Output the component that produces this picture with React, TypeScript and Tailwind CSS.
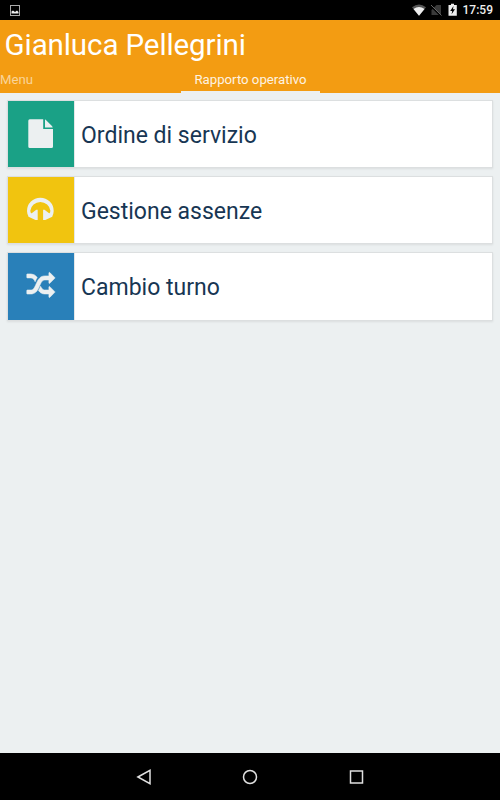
import type { ReactNode } from "react";

type Item = { label: string; color: string; icon: ReactNode };

const items: Item[] = [
  {
    label: "Ordine di servizio",
    color: "bg-[#1aa186]",
    icon: (
      <>
        <path d="M21.8 18.2H35.2V28.1H45V45.4Q45 46.9 43.5 46.9H21.8Q20.3 46.9 20.3 45.4V19.7Q20.3 18.2 21.8 18.2Z" />
        <path d="M37 18.5Q37.8 18.8 38.4 19.4L43.7 24.7Q44.4 25.4 44.7 26.4H37Z" />
      </>
    ),
  },
  {
    label: "Gestione assenze",
    color: "bg-[#f1c40f]",
    icon: (
      <>
        <path d="M20.7 39.5Q19 37 19 34A13.3 13.3 0 0 1 45.7 34Q45.7 37 44 39.5L41 37Q42.4 35.8 42.4 33.8A10.1 9.8 0 0 0 22.3 33.8Q22.3 35.8 23.7 37Z" />
        <path d="M29.7 32.7V43H27.5L20.5 39.8V37.3L23.7 36.3L28.3 32.7Z M35.1 32.7V43H37.3L44.3 39.8V37.3L41.1 36.3L36.5 32.7Z" />
      </>
    ),
  },
  {
    label: "Cambio turno",
    color: "bg-[#2980b9]",
    icon: (
      <g transform="translate(18.8 18.9) scale(.0157)" stroke="#ecf0f1" strokeWidth="35">
        <path d="M666 353q-60 92-137 273-22-45-37-72.5t-40.5-63.5-51-56.5-63-35-81.5-14.5H32q-14 0-23-9t-9-23V160q0-14 9-23t23-9h224q250 0 410 225zM1792 1280q0 14-9 23l-320 320q-9 9-23 9-13 0-22.5-9.5t-9.5-22.5v-192q-32 0-85 .5t-81 1-73-1-71-5-64-10.5-63-18.5-58-28.5-59-40-55-53.5-56-69.5q59-93 136-273 22 45 37 72.5t40.5 63.5 51 56.5 63 35 81.5 14.5h256V960q0-14 9-23t23-9q12 0 24 10l319 319q9 9 9 23zM1792 384q0 14-9 23l-320 320q-9 9-23 9-13 0-22.5-9.5t-9.5-22.5V512h-256q-48 0-87 15t-69 45-51 61.5-45 77.5q-32 62-78 171-29 66-49.5 111t-54 105-64 100-74 83-90 68.5-106.5 42-128 16.5H32q-14 0-23-9t-9-23v-192q0-14 9-23t23-9h224q48 0 87-15t69-45 51-61.5 45-77.5q32-62 78-171 29-66 49.5-111t54-105 64-100 74-83 90-68.5 106.5-42 128-16.5h256V64q0-14 9-23t23-9q12 0 24 10l319 319q9 9 9 23z" />
      </g>
    ),
  },
];

export default function App() {
  return (
    <div className="flex h-[800px] w-[500px] flex-col overflow-hidden bg-[#ecf0f1] font-['Roboto',sans-serif]">
      <StatusBar />
      <header className="flex h-[73px] shrink-0 flex-col bg-[#f39c12] text-white">
        <h1 className="h-[48px] pl-[4.6px] text-[29.5px] leading-[51px] tracking-[-0.1px] whitespace-nowrap">Gianluca Pellegrini</h1>
        <nav className="grid h-[25px] grid-cols-[181px_139px] text-[13.2px] leading-6">
          <span className="text-[#f9d499]">Menu</span>
          <span className="h-[25px] border-b-2 border-[#ecf0f1] text-center text-[#fdf3e3]">Rapporto operativo</span>
        </nav>
      </header>
      <main className="flex flex-1 flex-col gap-2 px-[7px] pt-[7px]">
        {items.map((item) => (
          <button
            key={item.label}
            className="flex h-[68.2px] items-stretch border border-[#dcdfe0] bg-white text-left shadow-[0_1px_2px_rgba(0,0,0,0.08)]"
          >
            <span className={`w-[66px] shrink-0 ${item.color}`}>
              <svg width="66" height="66" viewBox="0 0 66 66" fill="#ecf0f1">{item.icon}</svg>
            </span>
            <span className="border-l border-[#e4e7e8] pl-[6px] text-[23px] leading-[70px] text-[#173653]">{item.label}</span>
          </button>
        ))}
      </main>
      <NavBar />
    </div>
  );
}

function StatusBar() {
  return (
    <div className="flex h-5 shrink-0 items-center justify-between bg-black">
      <svg width="20" height="20" viewBox="0 0 20 20" className="ml-[5px]">
        <rect x="5.5" y="5.5" width="9" height="10" fill="none" stroke="#aaa" />
        <path d="M6.5 13.5V11.5L8 10.5L10 12L12 10.5L13.5 12V13.5Z" fill="#eee" />
      </svg>
      <div className="flex items-center pr-[7px]">
        <svg width="50" height="20" viewBox="0 0 50 20">
          <path d="M2 7.2Q9 2 16 7.2L9 15.8Z" fill="#555" />
          <path d="M3.5 8.9Q9 5 14.5 8.9L9 15.8Z" fill="#eee" />
          <path d="M31 5V15H21.5V10L26.5 5Z" fill="#3a3a3a" />
          <path d="M20.8 6L31.3 16.5" stroke="#000" strokeWidth="1.5" />
          <path d="M21 5L31.5 15.5" stroke="#666" />
          <path d="M38.5 5H41V3.7H44V5H46.8V15.8H38.5Z" fill="#eee" />
          <path d="M43.5 6L40.2 11H42.2L41.6 14.3L45 9.3H43Z" fill="#000" />
        </svg>
        <span className="ml-[3px] text-[12px] leading-[22px] font-medium text-[#eee]">17:59</span>
      </div>
    </div>
  );
}

function NavBar() {
  return (
    <footer className="flex h-[47px] shrink-0 items-center justify-center gap-[82px] bg-black">
      <svg width="24" height="24" viewBox="0 0 24 24" fill="none" stroke="#e0e0e0" strokeWidth="1.5">
        <path d="M5.9 12L18 5.3V18.7Z" />
      </svg>
      <svg width="24" height="24" viewBox="0 0 24 24" fill="none" stroke="#e0e0e0" strokeWidth="1.5">
        <circle cx="12" cy="12" r="6.5" />
      </svg>
      <svg width="24" height="24" viewBox="0 0 24 24" fill="none" stroke="#e0e0e0" strokeWidth="1.5">
        <rect x="6.5" y="6" width="12" height="12" />
      </svg>
    </footer>
  );
}
